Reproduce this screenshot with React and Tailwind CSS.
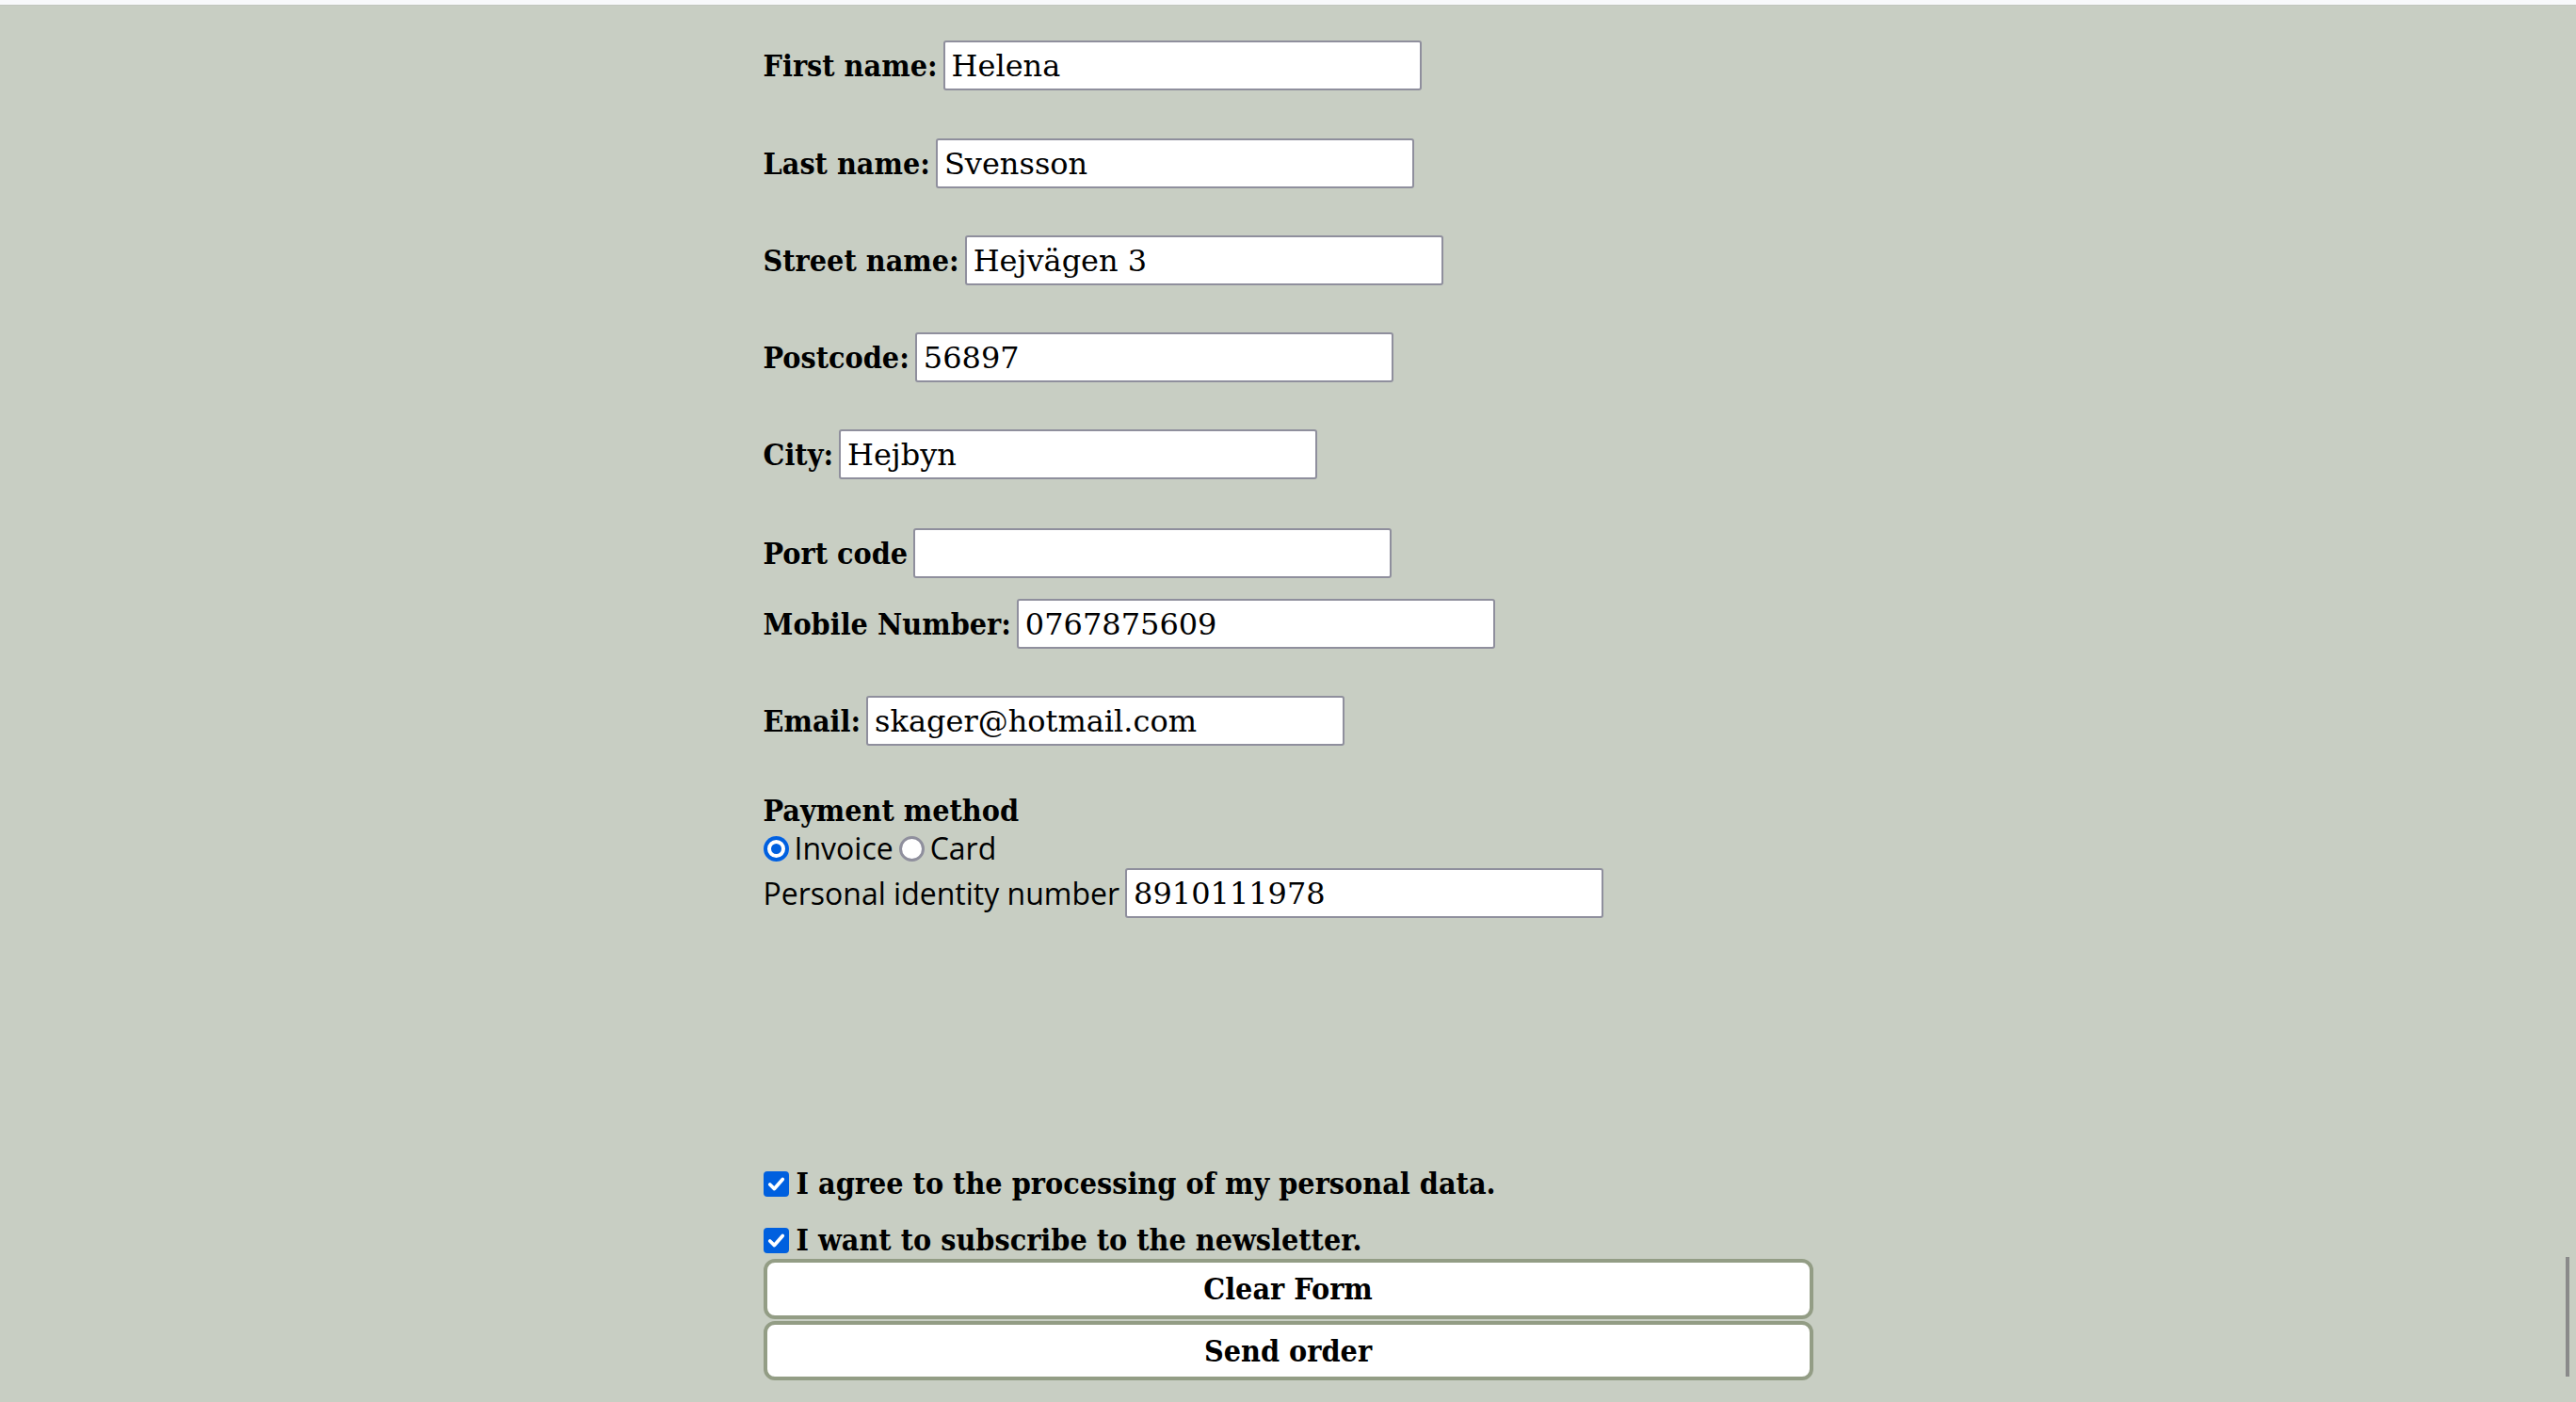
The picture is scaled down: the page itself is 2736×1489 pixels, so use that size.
import { useState } from 'react'

const serif = "font-['DejaVu_Serif',serif]"

const fields = [
    { label: 'First name:', value: 'Helena', mb: 'mb-[51px]' },
    { label: 'Last name:', value: 'Svensson', mb: 'mb-[50px]' },
    { label: 'Street name:', value: 'Hejvägen 3', mb: 'mb-[50px]' },
    { label: 'Postcode:', value: '56897', mb: 'mb-[50px]' },
    { label: 'City:', value: 'Hejbyn', mb: 'mb-[52px]' },
    { label: 'Port code', value: '', mb: 'mb-[22px]' },
    { label: 'Mobile Number:', value: '0767875609', mb: 'mb-[50px]' },
    { label: 'Email:', value: 'skager@hotmail.com', mb: 'mb-0' },
]

function TextInput({ value }) {
    return (
        <input
            type="text"
            defaultValue={value}
            className={`w-[508px] h-[53px] border-2 border-[#8f8f9d] rounded-[3px] bg-white px-[7px] text-[32px] text-black outline-none ${serif}`}
        />
    )
}

function Radio({ checked, onChange, label }) {
    return (
        <label className="flex items-center cursor-pointer">
            <input
                type="radio"
                name="payment"
                checked={checked}
                onChange={onChange}
                className="appearance-none m-0 w-[27px] h-[27px] rounded-full border-[3px] border-[#8f8f9d] bg-white checked:border-0 checked:bg-[#0060df] checked:shadow-[inset_0_0_0_4px_#0060df,inset_0_0_0_8px_#ffffff]"
            />
            <span className="ml-[6px]">{label}</span>
        </label>
    )
}

function Check({ label }) {
    const [on, setOn] = useState(true)
    return (
        <label className="flex items-center h-[40px] cursor-pointer">
            <span className="relative w-[27px] h-[27px] shrink-0">
                <input
                    type="checkbox"
                    checked={on}
                    onChange={() => setOn(!on)}
                    className="appearance-none m-0 w-[27px] h-[27px] rounded-[4px] border-2 border-[#8f8f9d] bg-white checked:border-0 checked:bg-[#0060df]"
                />
                {on && (
                    <svg viewBox="0 0 16 16" className="absolute inset-0 w-[27px] h-[27px] pointer-events-none">
                        <path d="M4 8.3 L6.8 11 L12 5" fill="none" stroke="white" strokeWidth="2.2" strokeLinecap="round" strokeLinejoin="round" />
                    </svg>
                )}
            </span>
            <span className={`ml-[8px] text-[32px] font-bold font-stretch-condensed text-black ${serif}`}>{label}</span>
        </label>
    )
}

export default function App() {
    const [pay, setPay] = useState('invoice')

    return (
        <div className="relative min-h-screen bg-[#c8cec3]">
            <div className="h-[6px] bg-[#f8f9fb] border-b border-[#c2c6bf]" />

            <form className="mx-auto w-[1115px] pt-[37px]" onSubmit={(e) => e.preventDefault()}>
                {fields.map((f) => (
                    <div key={f.label} className={`flex items-center h-[53px] ${f.mb}`}>
                        <label className={`mr-[6px] text-[32px] font-bold font-stretch-condensed text-black whitespace-nowrap ${serif}`}>
                            {f.label}
                        </label>
                        <TextInput value={f.value} />
                    </div>
                ))}

                {/* betalning */}
                <div className="mt-[48px]">
                    <h3 className={`h-[42px] flex items-center text-[32px] font-bold font-stretch-condensed text-black ${serif}`}>
                        Payment method
                    </h3>
                    <div className="flex items-center gap-[6px] h-[38px] text-[32px] text-black font-['Open_Sans',sans-serif]">
                        <Radio label="Invoice" checked={pay === 'invoice'} onChange={() => setPay('invoice')} />
                        <Radio label="Card" checked={pay === 'card'} onChange={() => setPay('card')} />
                    </div>
                    <div className="flex items-center h-[53px] mt-[2px]">
                        <label className="mr-[6px] text-[32px] text-black whitespace-nowrap font-['Open_Sans',sans-serif]">
                            Personal identity number
                        </label>
                        <TextInput value="8910111978" />
                    </div>
                </div>

                <div className="mt-[262px]">
                    <Check label="I agree to the processing of my personal data." />
                    <div className="h-[20px]" />
                    <Check label="I want to subscribe to the newsletter." />
                </div>

                <div className="flex flex-col gap-[2px]">
                    <button type="reset" className={`h-[64px] w-full bg-white border-4 border-[#939d85] rounded-[12px] text-[32px] font-bold font-stretch-condensed text-black ${serif}`}>
                        Clear Form
                    </button>
                    <button type="submit" className={`h-[63px] w-full bg-white border-4 border-[#939d85] rounded-[12px] text-[32px] font-bold font-stretch-condensed text-black ${serif}`}>
                        Send order
                    </button>
                </div>
            </form>

            {/* scrollbar-tumme */}
            <div className="absolute right-[7px] top-[1335px] w-[4px] h-[127px] bg-[#8a8a8a]" />
        </div>
    )
}
